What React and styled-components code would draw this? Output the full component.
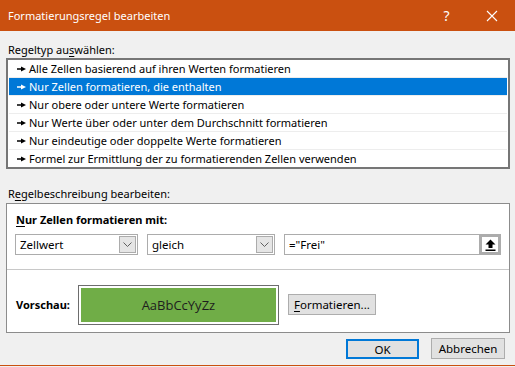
import React from "react";
import styled, { createGlobalStyle } from "styled-components";

const GlobalStyle = createGlobalStyle`
  html, body {
    margin: 0;
    padding: 0;
    background: #f0f0f0;
  }
  body {
    font-family: "Noto Sans", "Open Sans", sans-serif;
    font-size: 11px;
    color: #000;
  }
`;

const rules = [
  "Alle Zellen basierend auf ihren Werten formatieren",
  "Nur Zellen formatieren, die enthalten",
  "Nur obere oder untere Werte formatieren",
  "Nur Werte über oder unter dem Durchschnitt formatieren",
  "Nur eindeutige oder doppelte Werte formatieren",
  "Formel zur Ermittlung der zu formatierenden Zellen verwenden",
];

const Chevron = () => (
  <svg width="9" height="5" viewBox="0 0 9 5">
    <path d="M0.5 0.5 L4.5 4.5 L8.5 0.5" stroke="#606060" fill="none" />
  </svg>
);

const App = () => {
  return (
    <>
      <GlobalStyle />
      <StyleWindow>
        <StyleTitleBar>
          <StyleTitle>Formatierungsregel bearbeiten</StyleTitle>
          <StyleTitleButton>?</StyleTitleButton>
          <StyleTitleButton>
            <svg width="12" height="12" viewBox="0 0 12 12">
              <path d="M1 1 L11 11 M11 1 L1 11" stroke="#fff" strokeWidth="1.1" />
            </svg>
          </StyleTitleButton>
        </StyleTitleBar>

        <StyleBody>
          <StyleLabel>
            Regeltyp au<u>s</u>wählen:
          </StyleLabel>
          <StyleList>
            {rules.map((rule, i) => (
              <StyleRow key={rule} selected={i === 1}>
                <StyleBullet>
                  <svg width="9" height="6" viewBox="0 0 9 6">
                    <rect x="0" y="2.25" width="5" height="1.5" fill="currentColor" />
                    <path d="M4 0.5 L9 3 L4 5.5 Z" fill="currentColor" />
                  </svg>
                </StyleBullet>
                {rule}
              </StyleRow>
            ))}
          </StyleList>

          <StyleLabel $gap="16px">
            R<u>e</u>gelbeschreibung bearbeiten:
          </StyleLabel>
          <StyleGroup>
            <StyleCondition>
              <StyleBold>
                <u>N</u>ur Zellen formatieren mit:
              </StyleBold>
              <StyleFields>
                <StyleSelect $width="123px">
                  <span>Zellwert</span>
                  <StyleSelectArrow>
                    <Chevron />
                  </StyleSelectArrow>
                </StyleSelect>
                <StyleSelect $width="128px">
                  <span>gleich</span>
                  <StyleSelectArrow>
                    <Chevron />
                  </StyleSelectArrow>
                </StyleSelect>
                <StyleInput>
                  <span>="Frei"</span>
                  <StyleRefButton>
                    <svg width="11" height="12" viewBox="0 0 11 12">
                      <path d="M5.5 0.5 L10.5 5.5 H7.5 V9 H3.5 V5.5 H0.5 Z" fill="#000" />
                      <rect x="0.5" y="10.5" width="10" height="1.5" fill="#000" />
                    </svg>
                  </StyleRefButton>
                </StyleInput>
              </StyleFields>
            </StyleCondition>
            <StylePreviewRow>
              <StyleBold>Vorschau:</StyleBold>
              <StylePreview>
                <StylePreviewFill>AaBbCcYyZz</StylePreviewFill>
              </StylePreview>
              <StyleButton $width="88px">
                <u>F</u>ormatieren...
              </StyleButton>
            </StylePreviewRow>
          </StyleGroup>

          <StyleFooter>
            <StyleButton $width="73px" $primary>
              OK
            </StyleButton>
            <StyleButton $width="74px">Abbrechen</StyleButton>
          </StyleFooter>
        </StyleBody>
      </StyleWindow>
    </>
  );
};

export default App;

const StyleWindow = styled.div`
  width: 515px;
  height: 366px;
  box-sizing: border-box;
  border-bottom: 1px solid #ca5010;
  background: #f0f0f0;
  display: flex;
  flex-direction: column;
`;

const StyleTitleBar = styled.div`
  height: 31px;
  flex: none;
  background: #ca5010;
  color: #fff;
  display: flex;
  align-items: center;
  padding-left: 8px;
`;

const StyleTitle = styled.div`
  flex: 1;
  font-size: 11px;
`;

const StyleTitleButton = styled.div`
  width: 45px;
  height: 31px;
  display: flex;
  align-items: center;
  justify-content: center;
  font-size: 14px;
  &:last-child {
    width: 46px;
  }
`;

const StyleBody = styled.div`
  flex: 1;
  display: flex;
  flex-direction: column;
  padding: 0 5px 0 6px;
`;

const StyleLabel = styled.div`
  margin-top: ${(p) => p.$gap || "10px"};
  height: 17px;
  line-height: 17px;
  padding-left: 2px;
  u {
    text-decoration-thickness: 1px;
    text-underline-offset: 2px;
  }
`;

const StyleList = styled.div`
  height: 111px;
  box-sizing: border-box;
  border: 2px solid #767676;
  background: #fff;
  padding: 0 1px;
`;

const StyleRow = styled.div`
  height: 17px;
  line-height: 17px;
  border-bottom: 1px solid #ededed;
  display: flex;
  align-items: center;
  padding-left: 8px;
  white-space: nowrap;
  background: ${(p) => (p.selected ? "#0078d7" : "#fff")};
  color: ${(p) => (p.selected ? "#fff" : "#000")};
  &:last-child {
    border-bottom: none;
  }
`;

const StyleBullet = styled.span`
  display: inline-flex;
  width: 12px;
`;

const StyleGroup = styled.div`
  height: 130px;
  box-sizing: border-box;
  border: 1px solid #8c8c8c;
  background: #fff;
  display: flex;
  flex-direction: column;
  margin-top: 1px;
`;

const StyleCondition = styled.div`
  height: 66px;
  box-sizing: border-box;
  border-bottom: 1px solid #c8c8c8;
  padding: 8px 8px 0 8px;
`;

const StyleBold = styled.div`
  font-weight: bold;
  height: 16px;
  line-height: 16px;
  padding-left: 1px;
  u {
    text-underline-offset: 2px;
  }
`;

const StyleFields = styled.div`
  display: flex;
  gap: 9px;
  margin-top: 6px;
`;

const StyleSelect = styled.div`
  width: ${(p) => p.$width};
  height: 21px;
  box-sizing: border-box;
  border: 1px solid #acacac;
  display: flex;
  align-items: center;
  justify-content: space-between;
  padding-left: 4px;
  font-size: 11.5px;
`;

const StyleSelectArrow = styled.div`
  width: 17px;
  height: 17px;
  margin-right: 1px;
  box-sizing: border-box;
  background: #e5e5e5;
  border: 1px solid #acacac;
  display: flex;
  align-items: center;
  justify-content: center;
`;

const StyleInput = styled.div`
  width: 217px;
  height: 21px;
  box-sizing: border-box;
  border: 1px solid #acacac;
  display: flex;
  align-items: center;
  justify-content: space-between;
  padding-left: 4px;
  font-size: 11.5px;
`;

const StyleRefButton = styled.div`
  width: 22px;
  height: 21px;
  box-sizing: border-box;
  border: 3px solid #acacac;
  margin-right: -1px;
  background: #fff;
  display: flex;
  align-items: center;
  justify-content: center;
`;

const StylePreviewRow = styled.div`
  flex: 1;
  display: flex;
  align-items: flex-start;
  padding: 15px 0 0 8px;
  & > ${StyleBold} {
    margin-top: 12px;
  }
`;

const StylePreview = styled.div`
  width: 201px;
  height: 40px;
  box-sizing: border-box;
  border: 1px solid #6d6d6d;
  padding: 2px;
  margin-left: 8px;
  margin-right: 9px;
  background: #fff;
`;

const StylePreviewFill = styled.div`
  height: 100%;
  background: #70ad47;
  display: flex;
  align-items: center;
  justify-content: center;
  font-family: "Open Sans", "Noto Sans", sans-serif;
  font-size: 13px;
  color: #1e1e1e;
`;

const StyleButton = styled.button`
  width: ${(p) => p.$width};
  height: ${(p) => (p.$primary ? "20px" : "21px")};
  box-sizing: border-box;
  margin-top: ${(p) => (p.$primary ? "1px" : "0")};
  background: #e1e1e1;
  border: ${(p) => (p.$primary ? "2px solid #0078d7" : "1px solid #adadad")};
  font-family: "Noto Sans", "Open Sans", sans-serif;
  font-size: 11.5px;
  color: #000;
  padding: 0;
  u {
    text-underline-offset: 2px;
  }
  ${StylePreviewRow} & {
    margin-top: 9px;
  }
`;

const StyleFooter = styled.div`
  display: flex;
  justify-content: flex-end;
  gap: 12px;
  margin-top: 5px;
  padding-right: 5px;
`;
